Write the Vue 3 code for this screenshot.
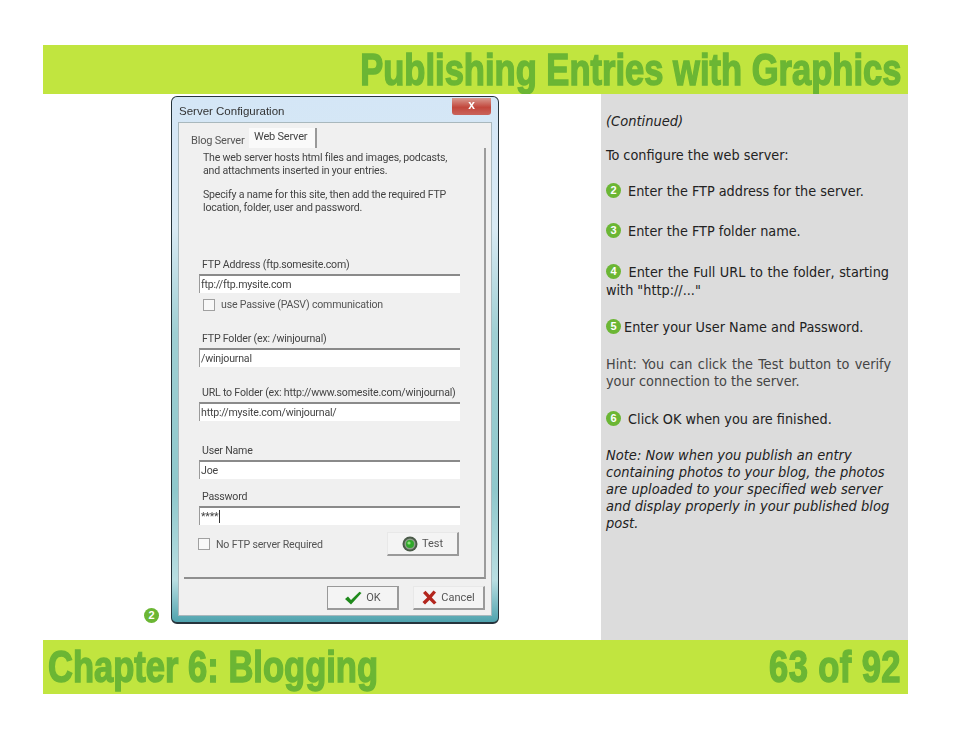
<script setup>
const fields = [
  { label: 'FTP Address (ftp.somesite.com)', value: 'ftp://ftp.mysite.com', cls: 'f-ftp' },
  { label: 'FTP Folder (ex: /winjournal)', value: '/winjournal', cls: 'f-folder' },
  { label: 'URL to Folder (ex: http://www.somesite.com/winjournal)', value: 'http://mysite.com/winjournal/', cls: 'f-url' },
  { label: 'User Name', value: 'Joe', cls: 'f-user' },
  { label: 'Password', value: '****', cls: 'f-pass' }
]
</script>

<template>
  <div class="page">
    <header class="bar top-bar">
      <h1 class="title title-right">Publishing Entries with Graphics</h1>
    </header>

    <main class="middle">
      <section class="shot">
        <span class="dot shot-dot">2</span>
        <div class="dialog">
          <div class="caption">
            <span>Server Configuration</span>
            <span class="close">x</span>
          </div>
          <div class="client">
            <div class="tabs">
              <span class="tab">Blog Server</span>
              <span class="tab tab-on">Web Server</span>
            </div>
            <div class="panel">
              <p class="blurb">The web server hosts html files and images, podcasts,<br>and attachments inserted in your entries.</p>
              <p class="blurb blurb-2">Specify a name for this site, then add the required FTP<br>location, folder, user and password.</p>

              <div v-for="f in fields" :key="f.label" class="field" :class="f.cls">
                <label>{{ f.label }}</label>
                <div class="input">{{ f.value }}<i v-if="f.cls === 'f-pass'" class="caret"></i></div>
                <div v-if="f.cls === 'f-ftp'" class="check check-pasv"><i class="box"></i>use Passive (PASV) communication</div>
              </div>

              <div class="test-row">
                <div class="check"><i class="box"></i>No FTP server Required</div>
                <button class="btn btn-test">
                  <svg width="16" height="16" viewBox="0 0 16 16">
                    <circle cx="8" cy="8" r="7.5" fill="#4a5a48" />
                    <circle cx="8" cy="8" r="5.5" fill="#8fa08c" />
                    <circle cx="8" cy="8" r="4" fill="#2fa82a" />
                    <circle cx="7" cy="7" r="1.6" fill="#8fe47a" />
                  </svg>
                  Test
                </button>
              </div>
            </div>
            <div class="actions">
              <button class="btn btn-ok">
                <svg width="18" height="14" viewBox="0 0 18 14">
                  <path d="M1 8 L4 5.5 L7 9 L15.5 0.8 L17.5 2 L7 13.5 Z" fill="#1f8a1c" />
                </svg>
                OK
              </button>
              <button class="btn btn-cancel">
                <svg width="15" height="15" viewBox="0 0 15 15">
                  <path d="M1 3 L3.5 0.8 L7.5 5 L11.5 0.5 L14 2.5 L9.8 7.5 L14.5 12.5 L12 14.5 L7.5 10 L3 14.5 L0.5 12 L5.2 7.5 Z" fill="#b3261e" />
                </svg>
                Cancel
              </button>
            </div>
          </div>
        </div>
      </section>

      <aside class="notes">
        <p class="em s-cont">(Continued)</p>
        <p class="s-intro">To configure the web server:</p>
        <p class="s-2"><span class="dot">2</span> Enter the FTP address for the server.</p>
        <p class="s-3"><span class="dot">3</span> Enter the FTP folder name.</p>
        <p class="s-4"><span class="dot">4</span> Enter the Full URL to the folder, starting with "http://..."</p>
        <p class="s-5"><span class="dot">5</span>Enter your User Name and Password.</p>
        <p class="hint s-hint">Hint: You can click the Test button to verify your connection to the server.</p>
        <p class="s-6"><span class="dot">6</span> Click OK when you are finished.</p>
        <p class="em">Note: Now when you publish an entry containing photos to your blog, the photos are uploaded to your specified web server and display properly in your published blog post.</p>
      </aside>
    </main>

    <footer class="bar bottom-bar">
      <h2 class="title title-left">Chapter 6: Blogging</h2>
      <h2 class="title title-right title-num">63 of 92</h2>
    </footer>
  </div>
</template>

<style scoped>
.page {
  width: 865px;
  margin-left: 43px;
  padding-top: 45px;
  font-family: "DejaVu Sans Condensed", "DejaVu Sans", sans-serif;
}

.bar {
  background: #c1e53f;
  display: flex;
  align-items: center;
  justify-content: flex-end;
  overflow: hidden;
}
.top-bar { height: 49px; }
.bottom-bar { height: 54px; justify-content: space-between; }

.title {
  margin: 0;
  font-family: "Liberation Sans", sans-serif;
  font-weight: 700;
  font-size: 44px;
  line-height: 1;
  color: #6bb634;
  white-space: nowrap;
  -webkit-text-stroke: 1.5px #6bb634;
}
.title-right { transform: scaleX(0.785); transform-origin: right center; margin-right: 7px; }
.title-left { transform: scaleX(0.785); transform-origin: left center; margin-left: 5px; }
.title-num { letter-spacing: 0.5px; }

.middle { display: flex; height: 546px; }

.shot {
  width: 558px;
  padding: 2px 0 16px 101px;
  box-sizing: border-box;
  display: flex;
  align-items: flex-end;
  gap: 12px;
}

.dot {
  display: inline-block;
  width: 15px;
  height: 15px;
  margin-right: 3px;
  border-radius: 50%;
  background: #6bb634;
  color: #fff;
  font: 700 11px/15px "Liberation Sans", sans-serif;
  text-align: center;
  vertical-align: 2px;
}
.shot-dot { flex: none; margin: 0 0 1px 0; }

.dialog {
  width: 328px;
  height: 528px;
  box-sizing: border-box;
  padding: 0 6px 6px;
  border: 1px solid #26343c;
  border-bottom-width: 2px;
  border-radius: 6px;
  background: linear-gradient(180deg, #d4e6f6 0%, #d9eaf4 25%, #9fcfd3 45%, #8fc8cc 75%, #b9dee2 92%, #4fa3ae 100%);
  display: flex;
  flex-direction: column;
  font-family: Roboto, "Liberation Sans", sans-serif;
  font-size: 10.6px;
  letter-spacing: -0.2px;
  color: #444;
  filter: blur(0.45px);
}

.caption {
  height: 23px;
  flex: none;
  display: flex;
  align-items: center;
  justify-content: space-between;
  color: #333;
  font-family: "Liberation Sans", sans-serif;
  font-size: 11.5px;
  letter-spacing: 0;
  padding: 2px 0 0 1px;
}
.close {
  width: 39px;
  height: 17px;
  margin: -8px 1px 0 0;
  background: linear-gradient(180deg, #d99a90, #c2473c 55%, #c9635a);
  border-radius: 0 0 3px 3px;
  color: #fff;
  font-weight: 700;
  font-size: 12px;
  line-height: 15px;
  text-align: center;
}

.client {
  flex: 1;
  background: #f0f0f0;
  border: 1px solid #a9b8bd;
  display: flex;
  flex-direction: column;
  padding: 5px 5px 0 5px;
}

.tabs {
  height: 20px;
  flex: none;
  display: flex;
  align-items: flex-end;
  padding-left: 7px;
  gap: 4px;
}
.tab { padding: 0 0 1px 0; width: 54px; color: #555; font-size: 11px; white-space: nowrap; }
.tab-on {
  width: 68px;
  height: 20px;
  box-sizing: border-box;
  padding: 2px 0 0 5px;
  background: #fafafa;
  border-right: 2px solid #999;
  color: #444;
}

.panel {
  height: 431px;
  flex: none;
  box-sizing: border-box;
  border-right: 2px solid #9c9c9c;
  border-bottom: 2px solid #8f8f8f;
  padding: 4px 0 0 19px;
  display: flex;
  flex-direction: column;
}
.blurb { margin: 0; line-height: 12.5px; }
.blurb-2 { margin-top: 12px; }

.field { display: flex; flex-direction: column; }
.field label { line-height: 13px; margin-left: -1px; white-space: nowrap; height: 13px; }
.input {
  width: 261px;
  height: 19px;
  box-sizing: border-box;
  margin: 3px 0 0 -4px;
  background: #fff;
  border-top: 2px solid #8a8a8a;
  border-left: 1px solid #9a9a9a;
  padding-left: 1px;
  line-height: 15px;
  color: #444;
  display: flex;
  align-items: center;
}
.caret { width: 1px; height: 13px; background: #333; margin-left: 1px; }

.f-ftp { margin-top: 44px; }
.f-folder { margin-top: 21px; }
.f-url { margin-top: 19px; }
.f-user { margin-top: 23px; }
.f-pass { margin-top: 11px; }

.check { display: flex; align-items: center; color: #555; }
.check-pasv { margin-top: 5px; }
.box {
  width: 10px;
  height: 10px;
  border: 1px solid #a0a0a0;
  background: #f8f8f8;
  margin-right: 6px;
}

.test-row {
  display: flex;
  justify-content: space-between;
  align-items: center;
  width: 261px;
  margin: 7px 0 0 -5px;
}

.btn {
  box-sizing: border-box;
  width: 72px;
  height: 24px;
  padding: 0;
  border: 0;
  border-top: 1px solid #e8e8e8;
  border-left: 1px solid #e8e8e8;
  border-right: 2px solid #9a9a9a;
  border-bottom: 2px solid #9a9a9a;
  background: #f4f4f4;
  font-family: Roboto, "Liberation Sans", sans-serif;
  font-size: 11px;
  color: #555;
  display: flex;
  align-items: center;
  justify-content: center;
  gap: 4px;
}

.actions {
  flex: 1;
  display: flex;
  justify-content: flex-end;
  gap: 14px;
  padding: 7px 1px 0 0;
}
.btn-ok { border-left-color: #999; border-top-color: #999; }

.notes {
  width: 307px;
  box-sizing: border-box;
  background: #dcdcdc;
  padding: 19px 17px 0 5px;
  font-size: 14.3px;
  line-height: 17px;
  color: #222;
}
.notes p { margin: 0; }
.em { font-size: 14.5px; font-style: italic; }
.hint { color: #444; text-align: justify; }
.s-cont { margin-bottom: 17px !important; }
.s-intro { margin-bottom: 19px !important; }
.s-2 { margin-bottom: 23px !important; }
.s-3 { margin-bottom: 23px !important; }
.s-4 { margin: 0 2px 20px 0 !important; line-height: 18px; text-align: justify; }
.s-5 { margin-bottom: 20px !important; }
.s-hint { margin-bottom: 21px !important; }
.s-6 { margin-bottom: 19px !important; }
</style>

<style>
html, body { background: #fff; }
</style>
